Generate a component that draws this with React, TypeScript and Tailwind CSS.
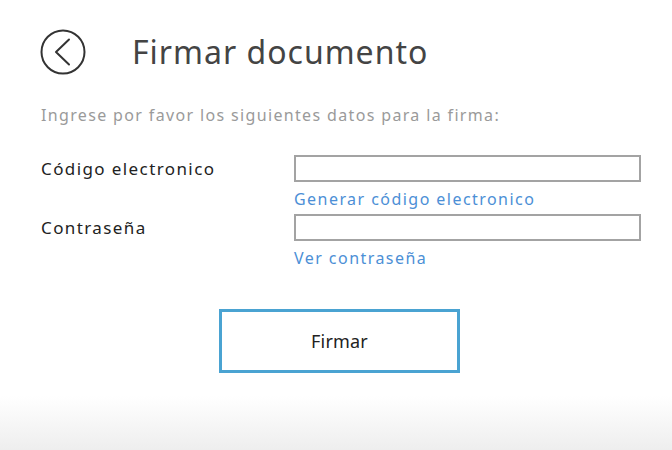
import React from "react";

function BackIcon() {
  return (
    <svg width="46" height="46" viewBox="0 0 46 46" fill="none">
      <circle cx="23" cy="23" r="21.5" stroke="#333" strokeWidth="2" />
      <path d="M29 10.5 L16 23 L29 35.5" stroke="#333" strokeWidth="2" strokeLinecap="round" strokeLinejoin="round" />
    </svg>
  );
}

function Field({ label, link, className = "" }: { label: string; link: string; className?: string }) {
  return (
    <div className={"flex " + className}>
      <div className="w-[253px] pt-[2px] text-[17px] leading-[24px] tracking-[1.4px] text-[#222]">{label}</div>
      <div className="flex flex-col">
        <div className="h-[27px] w-[347px] border-2 border-[#a3a3a3] bg-white" />
        <a className="mt-[6px] text-[16px] leading-[22px] tracking-[1.45px] text-[#4c8fd6]">{link}</a>
      </div>
    </div>
  );
}

export default function App() {
  return (
    <div
      className="flex h-[450px] w-[672px] flex-col bg-gradient-to-b from-white from-[88%] to-[#eeeeee]"
      style={{ fontFamily: '"Noto Sans", "Open Sans", sans-serif' }}
    >
      <div className="flex items-center pl-[40px] pt-[29px]">
        <BackIcon />
        <h1 className="ml-[46px] text-[32px] leading-[40px] tracking-[1px] text-[#444]">Firmar documento</h1>
      </div>
      <p className="ml-[41px] mt-[29px] text-[16px] leading-[22px] tracking-[1.35px] text-[#9a9a9a]">
        Ingrese por favor los siguientes datos para la firma:
      </p>
      <div className="ml-[41px] mt-[29px] flex flex-col">
        <Field label="Código electronico" link="Generar código electronico" />
        <Field label="Contraseña" link="Ver contraseña" className="mt-[4px]" />
      </div>
      <div className="ml-[219px] mt-[40px] flex h-[64px] w-[241px] items-center justify-center border-[3px] border-[#4aa3d2] bg-white text-[18px] tracking-[0.2px] text-[#222]">
        Firmar
      </div>
    </div>
  );
}
